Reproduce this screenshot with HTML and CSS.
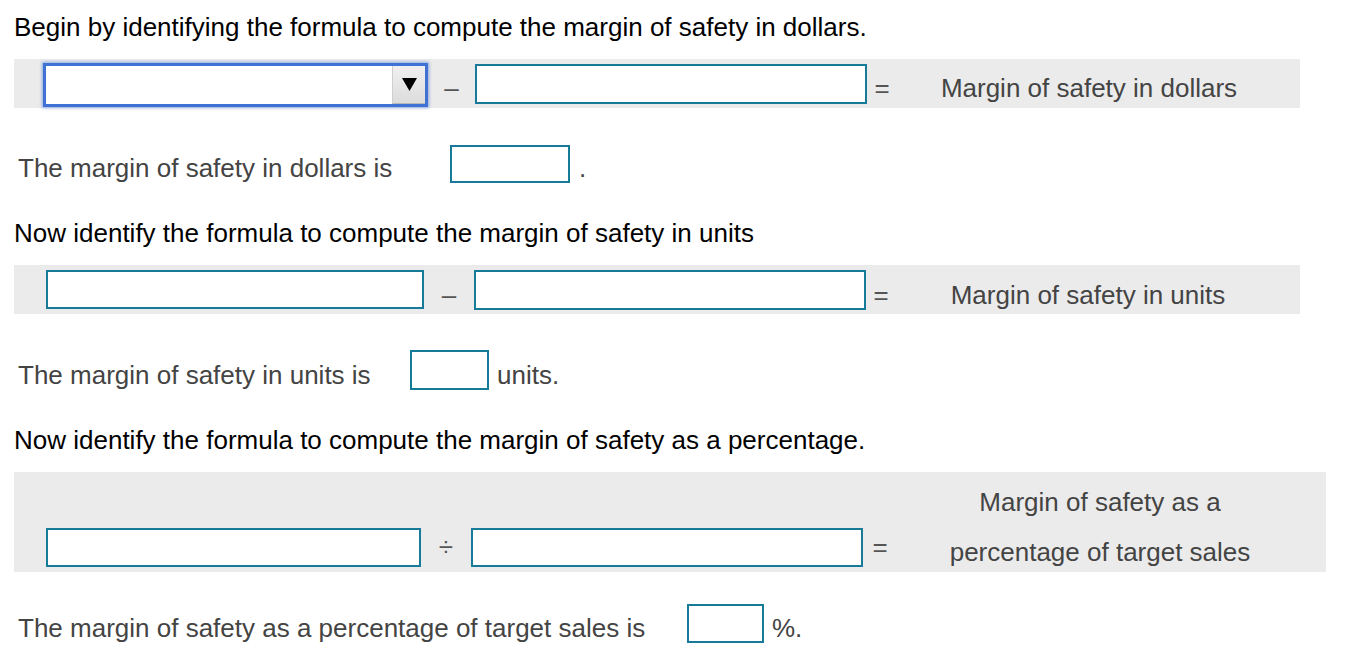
FILE: index.html
```html
<!DOCTYPE html>
<html>
<head>
<meta charset="utf-8">
<link rel="stylesheet" href="styles.css">
</head>
<body>
<p class="heading h1">Begin by identifying the formula to compute the margin of safety in dollars.</p>

<div class="formula f1">
  <div class="dropdown"><div class="dd-field"></div><div class="dd-btn"><svg width="15" height="13" viewBox="0 0 15 13"><path d="M0 0H15L7.5 13Z" fill="#000"/></svg></div></div>
  <div class="op op-a">–</div>
  <div class="box wide"></div>
  <div class="op op-eq">=</div>
  <div class="label">Margin of safety in dollars</div>
</div>

<div class="answer a1">
  <span class="q q1">The margin of safety in dollars is</span>
  <span class="box small s1"></span>
  <span class="after dot">.</span>
</div>

<p class="heading h2">Now identify the formula to compute the margin of safety in units</p>

<div class="formula f2">
  <div class="box mid"></div>
  <div class="op op-b">–</div>
  <div class="box wide"></div>
  <div class="op op-eq">=</div>
  <div class="label">Margin of safety in units</div>
</div>

<div class="answer a2">
  <span class="q q2">The margin of safety in units is</span>
  <span class="box small s2"></span>
  <span class="after">units.</span>
</div>

<p class="heading h3">Now identify the formula to compute the margin of safety as a percentage.</p>

<div class="formula f3">
  <div class="box mid3"></div>
  <div class="op op-b div">÷</div>
  <div class="box wide"></div>
  <div class="op op-eq eq3">=</div>
  <div class="label label3">Margin of safety as a<br>percentage of target sales</div>
</div>

<div class="answer a3">
  <span class="q q3">The margin of safety as a percentage of target sales is</span>
  <span class="box small s3"></span>
  <span class="after">%.</span>
</div>
</body>
</html>
```

FILE: styles.css
```css
html, body {
  margin: 0;
  padding: 0;
  background: #fff;
}
body {
  padding: 12px 14px 0 14px;
  font-family: "Liberation Sans", Arial, sans-serif;
  font-size: 26px;
  color: #444;
}
.heading {
  margin: 0;
  line-height: 30px;
  color: #000;
}
.h1 { margin-bottom: 17px; }
.h2 { margin-top: 35px; margin-bottom: 17px; }
.h3 { margin-top: 35px; margin-bottom: 17px; }

.formula {
  background: #ebebeb;
  display: flex;
  align-items: center;
}
.f1 {
  width: 1286px;
  height: 49px;
  padding-left: 29px;
  box-sizing: border-box;
  align-items: flex-start;
  padding-top: 4px;
}
.f2 {
  width: 1286px;
  height: 49px;
  padding-left: 32px;
  box-sizing: border-box;
}
.f3 {
  width: 1312px;
  height: 100px;
  padding-left: 32px;
  box-sizing: border-box;
  align-items: flex-end;
  padding-bottom: 5px;
}

.box {
  box-sizing: border-box;
  border: 2px solid #177a99;
  background: #fff;
  height: 40px;
  flex: none;
}
.wide { width: 392px; }
.f1 .wide { margin-top: 1px; }
.mid { width: 378px; height: 39px; }
.mid3 { width: 375px; height: 39px; }
.f3 .wide { height: 39px; }

.dropdown {
  box-sizing: border-box;
  width: 385px;
  height: 44px;
  border: 3px solid #3f72d4;
  box-shadow: 0 0 3px 1px rgba(63, 114, 212, 0.55);
  background: #fff;
  display: flex;
  flex: none;
}
.dd-field { flex: 1; }
.dd-btn {
  width: 32px;
  background: linear-gradient(#f0f0f0, #dcdcdc);
  border-left: 1px solid #cfcfcf;
  border-bottom: 1px solid #b8b8b8;
  display: flex;
  align-items: center;
  justify-content: center;
}

.op {
  flex: none;
  text-align: center;
  color: #555;
  line-height: 30px;
}
.f1 .op, .f1 .label { align-self: center; margin-top: 5px; }
.f2 .op, .f2 .label { margin-top: 10px; }
.op-a { width: 47px; }
.op-b { width: 50px; }
.op-eq { width: 30px; }
.f3 .op { height: 39px; line-height: 39px; }
.f3 .div { width: 50px; }
.f3 .eq3 { width: 34px; }

.label {
  flex: none;
  width: 384px;
  text-align: center;
  color: #444;
  line-height: 30px;
}
.label3 {
  width: 406px;
  line-height: 50px;
  margin-bottom: -10px;
}

.answer {
  display: flex;
  align-items: flex-end;
  padding-left: 4px;
  line-height: 30px;
}
.a1 { margin-top: 37px; }
.a2 { margin-top: 36px; }
.a3 { margin-top: 32px; }
.q { flex: none; }
.q1 { width: 432px; }
.q2 { width: 392px; }
.q3 { width: 669px; }
.small { display: block; }
.s1 { width: 120px; height: 38px; }
.s2 { width: 79px; height: 40px; }
.s3 { width: 77px; height: 39px; }
.after { margin-left: 8px; }
.dot { margin-left: 9px; }
```
